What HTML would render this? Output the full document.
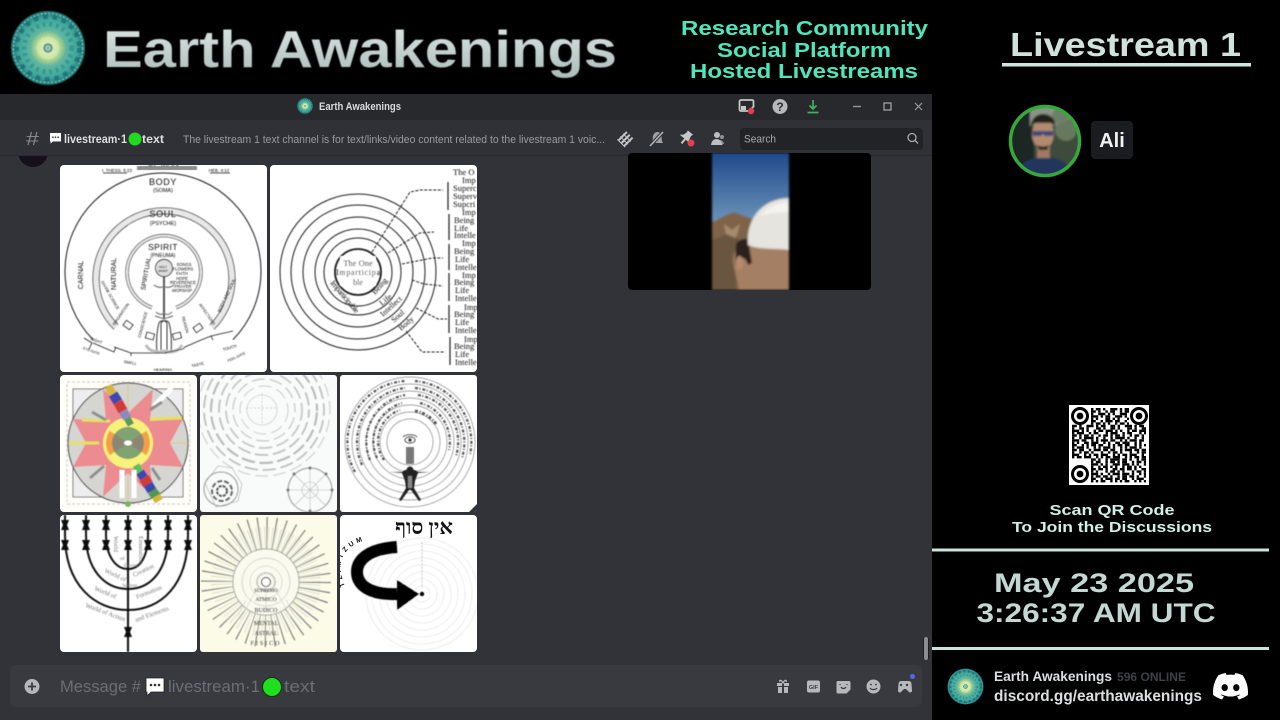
<!DOCTYPE html>
<html><head><meta charset="utf-8"><title>Earth Awakenings</title>
<style>
html,body{margin:0;padding:0;background:#000;width:1280px;height:720px;overflow:hidden}
svg{display:block}
text{font-family:"Liberation Sans","DejaVu Sans",sans-serif}
.s{font-family:"Liberation Serif",serif}
.b{font-weight:bold}
</style></head><body>
<svg xmlns="http://www.w3.org/2000/svg" width="1280" height="720" viewBox="0 0 1280 720">
<defs>
<radialGradient id="mg"><stop offset="0" stop-color="#5f9f9a"/><stop offset=".09" stop-color="#dfeebc"/><stop offset=".28" stop-color="#cfe6a4"/><stop offset=".45" stop-color="#62b8a2"/><stop offset=".8" stop-color="#3fa79d"/><stop offset="1" stop-color="#1c6f70"/></radialGradient>
<linearGradient id="tt" x1="0" y1="0" x2="0" y2="1"><stop offset="0" stop-color="#dfe8e6"/><stop offset="1" stop-color="#a9bcb8"/></linearGradient>
<linearGradient id="sky" x1="0" y1="0" x2="0" y2="1"><stop offset="0" stop-color="#1f4a8c"/><stop offset=".5" stop-color="#6c93b8"/><stop offset="1" stop-color="#b5c8d4"/></linearGradient>
<filter id="bl" filterUnits="userSpaceOnUse" x="0" y="0" width="1280" height="720"><feGaussianBlur stdDeviation=".5"/></filter>
<filter id="bl2" filterUnits="userSpaceOnUse" x="0" y="0" width="1280" height="720"><feGaussianBlur stdDeviation="1"/></filter>
<clipPath id="c1"><rect x="60" y="165" width="207" height="207" rx="4"/></clipPath>
<clipPath id="c2"><rect x="270" y="165" width="207" height="207" rx="4"/></clipPath>
<clipPath id="c3"><rect x="60" y="375" width="137" height="137" rx="4"/></clipPath>
<clipPath id="c4"><rect x="200" y="375" width="137" height="137" rx="3"/></clipPath>
<clipPath id="c5"><rect x="340" y="375" width="137" height="137" rx="3"/></clipPath>
<clipPath id="c6"><rect x="60" y="515" width="137" height="137" rx="4"/></clipPath>
<clipPath id="c7"><rect x="200" y="515" width="137" height="137" rx="3"/></clipPath>
<clipPath id="c8"><rect x="340" y="515" width="137" height="137" rx="4"/></clipPath>
<clipPath id="cv"><rect x="628" y="153" width="243" height="137" rx="4"/></clipPath>
<clipPath id="ca"><circle cx="1045" cy="141" r="34"/></clipPath>
<path id="tz" d="M345 586C336 566 340 546 367 540"/>
<symbol id="m" viewBox="-40 -40 80 80">
<circle r="39" fill="url(#mg)"/>
<circle r="33" fill="none" stroke="#1b6a70" stroke-width="5" stroke-dasharray="5 5" opacity=".75"/>
<circle r="25" fill="none" stroke="#2f8f84" stroke-width="5" stroke-dasharray="3 4" opacity=".7"/>
<circle r="36.500" fill="none" stroke="#7fe0c8" stroke-width="1" stroke-dasharray="2 2"/>
<circle r="15" fill="none" stroke="#a7c96a" stroke-width="6" stroke-dasharray="1 2" opacity=".8"/>
<circle r="4" fill="none" stroke="#3f8f8f" stroke-width="2"/>
</symbol>
<symbol id="chat" viewBox="0 0 20 20">
<path d="M1 1h18v14H6l-4 4v-4H1z" fill="#fff" stroke="#222" stroke-width=".8"/>
<circle cx="6" cy="8" r="1.300" fill="#333"/><circle cx="10" cy="8" r="1.300" fill="#333"/><circle cx="14" cy="8" r="1.300" fill="#333"/>
</symbol>
</defs>

<rect width="1280" height="720" fill="#000"/>

<!-- top banner -->
<use href="#m" x="9" y="10" width="78" height="76" filter="url(#bl)"/>
<text x="103" y="67" font-size="52" class="b" fill="url(#tt)" textLength="514" lengthAdjust="spacingAndGlyphs" filter="url(#bl)">Earth Awakenings</text>
<g fill="#4fe6bd" class="b" text-anchor="middle" font-size="20">
<text x="804.500" y="35" textLength="247" lengthAdjust="spacingAndGlyphs">Research Community</text>
<text x="804" y="57" textLength="174" lengthAdjust="spacingAndGlyphs">Social Platform</text>
<text x="804" y="78" textLength="228" lengthAdjust="spacingAndGlyphs">Hosted Livestreams</text>
</g>

<!-- window -->
<rect x="0" y="94" width="932" height="626" fill="#323338"/>
<circle cx="33" cy="152" r="15" fill="#15101c"/>
<rect x="0" y="94" width="932" height="26" fill="#27292d"/>
<rect x="0" y="120" width="932" height="35" fill="#2f3136"/>
<rect x="0" y="155" width="932" height="1" fill="#292a2e"/>

<!-- title bar -->
<use href="#m" x="297" y="98" width="16" height="16"/>
<text x="319" y="110" font-size="11" class="b" fill="#d8dadd" textLength="82" lengthAdjust="spacingAndGlyphs">Earth Awakenings</text>
<path d="M741 100h11a1.500 1.500 0 0 1 1.500 1.500v5l-4 4.500h-8.500a1.500 1.500 0 0 1-1.500-1.500v-8a1.500 1.500 0 0 1 1.500-1.500z" fill="none" stroke="#c4c6c9" stroke-width="1.800"/>
<rect x="741" y="106" width="5" height="4" fill="#c4c6c9"/>
<circle cx="751" cy="111" r="3.200" fill="#e23f52"/>
<circle cx="780" cy="106.500" r="7.500" fill="#b6b8bb"/>
<text x="780" y="111" font-size="12" class="b" text-anchor="middle" fill="#2a2b2f">?</text>
<path d="M813 100v9M809.500 105.500l3.500 3.500 3.500-3.500M807.500 112.500h11" fill="none" stroke="#3fb35f" stroke-width="1.700"/>
<path d="M853 106.500h8" stroke="#9b9da1" stroke-width="1.300"/>
<rect x="884" y="103" width="7" height="7" fill="none" stroke="#a8aaae" stroke-width="1.200"/>
<path d="M915 103l7 7M922 103l-7 7" stroke="#9b9da1" stroke-width="1.200"/>

<!-- channel header -->
<text x="26" y="145" font-size="18" fill="#84878d" textLength="13" lengthAdjust="spacingAndGlyphs">#</text>
<use href="#chat" x="49" y="132" width="13" height="13"/>
<text x="64" y="143" font-size="12" class="b" fill="#dcdee1" textLength="63" lengthAdjust="spacingAndGlyphs">livestream·1</text>
<circle cx="135" cy="139" r="6.500" fill="#22d922"/>
<text x="142" y="143" font-size="12" class="b" fill="#dcdee1" textLength="22" lengthAdjust="spacingAndGlyphs">text</text>
<text x="183" y="143" font-size="11" fill="#989ba1" textLength="422" lengthAdjust="spacingAndGlyphs">The livestream 1 text channel is for text/links/video content related to the livestream 1 voic...</text>
<g transform="translate(625.500 139) rotate(-45)" stroke="#c2c4c7" stroke-width="2" fill="none"><path d="M-6 -4h12M-6 0h12M-6 4h12"/><path d="M-6 -5.500v11M-2 -5.500v11M2 -5.500v11" stroke-width="1"/></g>
<path d="M652 143c1-2 .5-5 1-7 .6-2.500 2.500-4 4.500-4 2.500 0 3.800 2 4 4 .2 2.500 0 5 1.500 7z" fill="#9ea0a4"/>
<path d="M650 146l13-14" stroke="#2f3136" stroke-width="3.500"/><path d="M650 146l13-14" stroke="#b6b8bb" stroke-width="1.500"/>
<g transform="translate(686 138) rotate(40)"><path d="M-3.500-7h7l-1 2 1 4 2.500 2.500h-13L-4-1l1-4z" fill="#c6c8cb"/><rect x="-1" y="1" width="2" height="6" fill="#c6c8cb"/></g>
<circle cx="691" cy="143" r="3.500" fill="#e23f52"/>
<circle cx="717" cy="135" r="3" fill="#bcbec1"/><path d="M711 145c.5-4 2.500-6 5.500-6s5.500 2 6 6z" fill="#bcbec1"/><circle cx="722" cy="137" r="2" fill="#8e9094"/><path d="M720 140c2 0 3.500 1.500 4 4h-2z" fill="#8e9094"/>
<rect x="740" y="128" width="183" height="22" rx="4" fill="#222327"/>
<text x="744" y="142.500" font-size="11" fill="#a7a9ad" textLength="32" lengthAdjust="spacingAndGlyphs">Search</text>
<circle cx="912" cy="137.500" r="4" fill="none" stroke="#a7a9ad" stroke-width="1.300"/><path d="M915 140.500l3 3" stroke="#a7a9ad" stroke-width="1.300"/>

<!-- video -->
<g clip-path="url(#cv)">
<rect x="628" y="153" width="243" height="137" fill="#000"/>
<g filter="url(#bl2)">
<rect x="712" y="153" width="77" height="137" fill="url(#sky)"/>
<path d="M712 222l12-6 10-4 16 6 39 8v64h-77z" fill="#7f6448"/>
<path d="M712 240l20-8 10 10-6 48h-24z" fill="#6a5640"/>
<path d="M724 224l8 6 8-6-4 14-10-4z" fill="#a58c6e"/>
<path d="M733 262c0-12 6-18 14-18h42v46h-50z" fill="#a47f63"/>
<path d="M736 244c2-4 8-6 12-5l4 24-4 2c-2-6-4-8-7-6l-1 8-5-2z" fill="#2b211b"/>
<ellipse cx="739.500" cy="263" rx="4" ry="7" fill="#b48a6b"/>
<path d="M748 245c-2-24 12-46 41-47v52c-14-2-30 0-41-5z" fill="#e6e4de"/>
<path d="M760 215c8-8 18-12 29-13v10c-10 0-20 2-29 3z" fill="#f4f3ef"/>
</g>
</g>

<!-- IMG 1 -->
<g clip-path="url(#c1)"><rect x="60" y="165" width="207" height="207" fill="#fff"/>
<g filter="url(#bl)" fill="none" stroke="#1a1a1a">
<path d="M93 339.600A98 98 0 1 1 233 339.600" stroke-width="1"/>
<path d="M116 327A68 68 0 1 1 212 327" stroke="#222" stroke-width="7"/>
<path d="M116 327A68 68 0 1 1 212 327" stroke="#e8e8e8" stroke-width="5.400"/>
<path d="M152 307.600A37 37 0 1 1 176 307.600" stroke="#222" stroke-width="3.400"/>
<path d="M152 307.600A37 37 0 1 1 176 307.600" stroke="#ececec" stroke-width="2"/>
<circle cx="164" cy="268" r="8.500" stroke="#222" stroke-width=".9" fill="#ddd"/>
<path d="M164 277v42" stroke="#555" stroke-width="2"/>
<path d="M154 285c4 3 8 3 10 1 2 2 6 2 10-1M156 312c3 3 6 3 8 1 2 2 5 2 8-1M155 316c4 1 6 2 9 3 3-1 5-2 9-3" stroke="#777" stroke-width="1.200"/>
<path d="M161 350v-26a3 3 0 0 1 6 0v26M157 351c-1-8 0-22 2-28 1-3 9-3 10 0 2 6 3 20 2 28" stroke="#333" stroke-width="1"/>
<path d="M146 345c3 7 13 8 18 6 5 2 15 1 18-6" stroke="#bbb" stroke-width="3"/>
<path d="M84 338l8 5-3 6M93 343l21 9 2-5M114 347l17 6v3M131 353h36M164 353l19-4M183 349l2-2 16-7M201 340l10-4 2 4M211 336l22-5" stroke-width=".8"/>
<rect x="124" y="322" width="8" height="6" transform="rotate(35 128 325)" stroke-width=".8"/>
<rect x="146" y="333" width="8" height="6" transform="rotate(15 150 336)" stroke-width=".8"/>
<rect x="173" y="333" width="8" height="6" transform="rotate(-15 177 336)" stroke-width=".8"/>
<rect x="194" y="325" width="8" height="6" transform="rotate(-35 198 328)" stroke-width=".8"/>
<path d="M137 167h60M137 169h60" stroke-width="1"/>
<path d="M103 173h24M210 173h20" stroke-width=".8"/>
</g>
<g fill="#111" text-anchor="middle" font-size="8" filter="url(#bl)">
<text x="163" y="166">OF MAN</text>
<text x="117" y="172" font-size="4.500">I. THESS. 5:23</text><text x="219" y="172" font-size="4.500">HEB. 4:12</text>
<text x="163" y="185" font-size="9" letter-spacing=".6">BODY</text><text x="163" y="192" font-size="5.500">(SOMA)</text>
<text x="163" y="217" font-size="9" letter-spacing=".6">SOUL</text><text x="163" y="225" font-size="5.500">(PSYCHE)</text>
<text x="163" y="250" font-size="8.500" letter-spacing=".4">SPIRIT</text><text x="163" y="257" font-size="5">(PNEUMA)</text>
<text x="163" y="268" font-size="3">HOLY</text><text x="163" y="272" font-size="3">SPIRIT</text>
<text transform="translate(83 275) rotate(-90)" font-size="7">CARNAL</text>
<text transform="translate(116 274) rotate(-90)" font-size="7">NATURAL</text>
<text transform="translate(148 274) rotate(-80)" font-size="6.500">SPIRITUAL</text>
<g font-size="4.200"><text x="184" y="266">SONGS</text><text x="183" y="270.500">FLOWERS</text><text x="182" y="275">FAITH</text><text x="182" y="280">HOPE</text><text x="183" y="284">REVERENCE</text><text x="183" y="288">PRAYER</text><text x="182" y="292">WORSHIP</text></g>
<text transform="translate(109 296) rotate(60)" font-size="4">DIVINE SCIENCE</text>
<text transform="translate(228 296) rotate(-65)" font-size="4.500">BODY AND SOUL</text>
<text transform="translate(122 315) rotate(-55)" font-size="4">IMAGINATION</text>
<text transform="translate(144 325) rotate(-75)" font-size="4">CONSCIENCE</text>
<text transform="translate(184 325) rotate(75)" font-size="4">REASON</text>
<text transform="translate(206 315) rotate(55)" font-size="4">AFFECTIONS</text>
<text transform="translate(96 342) rotate(20)" font-size="4">SIGHT</text>
<text transform="translate(91 352) rotate(20)" font-size="3.500">EYE-GATE</text>
<text x="130" y="364" font-size="4" transform="rotate(10 130 364)">SMELL</text>
<text x="163" y="371" font-size="4">HEARING</text>
<text x="198" y="366" font-size="4" transform="rotate(-12 198 366)">TASTE</text>
<text x="230" y="349" font-size="4" transform="rotate(-18 230 349)">TOUCH</text>
<text x="237" y="358" font-size="3.500" transform="rotate(-25 237 358)">FEEL-GATE</text>
</g></g>

<!-- IMG 2 -->
<g clip-path="url(#c2)"><rect x="270" y="165" width="207" height="207" fill="#fff"/>
<g filter="url(#bl)" fill="none" stroke="#1e1e1e" stroke-width="1">
<circle cx="358" cy="272" r="78"/><circle cx="358" cy="272" r="67"/><circle cx="358" cy="272" r="55"/><circle cx="358" cy="272" r="43"/><circle cx="358" cy="272" r="34"/>
<circle cx="358" cy="272" r="23" stroke-width="1.800"/>
<path d="M372 252l38-60 10-2h23M388 253l32-20 14-1M402 264l30-6h11M412 280l12 4 19 2M416 308l22 11h9M406 331l16 21h23" stroke-dasharray="3 1.500"/>
<path d="M448 182v28M449 214v26M449 244v26M449 273v28M449 305v28M450 337v28" stroke-width="1.200"/>
</g>
<g class="s" fill="#111" filter="url(#bl)">
<rect x="340" y="256" width="36" height="30" fill="#fff"/>
<text class="s" x="358" y="266" font-size="8.500" text-anchor="middle">The One</text>
<text class="s" x="358" y="275" font-size="8" text-anchor="middle" textLength="44">Imparticipa</text>
<text class="s" x="358" y="285" font-size="8" text-anchor="middle">ble</text>
<g font-size="8.500">
<text class="s" x="453" y="175">The O</text><text class="s" x="462" y="183">Imp</text><text class="s" x="453" y="191">Superc</text><text class="s" x="453" y="199">Superv</text><text class="s" x="453" y="207">Supcri</text>
<text class="s" x="462" y="215">Imp</text><text class="s" x="454" y="223">Being</text><text class="s" x="454" y="231">Life</text><text class="s" x="454" y="238">Intelle</text>
<text class="s" x="462" y="246">Imp</text><text class="s" x="454" y="254">Being</text><text class="s" x="455" y="262">Life</text><text class="s" x="455" y="270">Intelle</text>
<text class="s" x="462" y="278">Imp</text><text class="s" x="454" y="285">Being</text><text class="s" x="455" y="293">Life</text><text class="s" x="455" y="301">Intelle</text>
<text class="s" x="464" y="310">Imp</text><text class="s" x="454" y="317">Being</text><text class="s" x="455" y="325">Life</text><text class="s" x="455" y="333">Intelle</text>
<text class="s" x="464" y="342">Imp</text><text class="s" x="454" y="349">Being</text><text class="s" x="455" y="357">Life</text><text class="s" x="455" y="365">Intelle</text>
</g>
<text class="s" transform="translate(330 283) rotate(50)" font-size="8" textLength="40">Imparticipable</text>
<text class="s" transform="translate(375 295) rotate(-48)" font-size="8">Being</text>
<text class="s" transform="translate(382 306) rotate(-40)" font-size="8">Life</text>
<text class="s" transform="translate(383 317) rotate(-42)" font-size="8">Intellect</text>
<text class="s" transform="translate(394 323) rotate(-42)" font-size="8">Soul</text>
<text class="s" transform="translate(401 331) rotate(-40)" font-size="8">Body</text>
</g></g>

<!-- IMG 3 -->
<g clip-path="url(#c3)"><rect x="60" y="375" width="137" height="137" fill="#fffef8"/>
<g filter="url(#bl)">
<rect x="67" y="382" width="123" height="122" fill="none" stroke="#bbb" stroke-width=".8" stroke-dasharray="3 2"/>
<rect x="73" y="389" width="110" height="108" fill="#eee" stroke="#555" stroke-width=".8"/>
<circle cx="128" cy="443" r="60" fill="#d5d5d2" stroke="#555" stroke-width="1.200"/>
<path d="M68 443h120M128 383v120" stroke="#e8c060" stroke-width=".8"/>
<polygon points="103,389 128,413 153,389 150,421 183,419 170,443 183,467 150,465 153,497 128,473 103,497 106,465 73,467 86,443 73,419 106,421" fill="#ec8b90"/>
<path d="M69 443h30M150 419l32-1M82 420l28 1" stroke="#e8e05a" stroke-width="3"/>
<path d="M172 388l-18 18" stroke="#fff" stroke-width="5"/>
<path d="M92 412l14 8M150 410l12-8M90 478l14-12M160 480l-8-12" stroke="#8f8f8f" stroke-width="3"/>
<circle cx="128" cy="443" r="25" fill="#f7f27c"/>
<circle cx="128" cy="443" r="22" fill="#f2a047"/>
<path d="M128 443l-21-14A25 25 0 0 1 149 429zM128 443l-21 14A25 25 0 0 0 149 457z" fill="#f7f27c"/>
<path d="M128 443l-12-9a15 15 0 0 1 24 0zM128 443l-12 9a15 15 0 0 0 24 0z" fill="#f2a047"/>
<circle cx="128" cy="443" r="16" fill="#8d8672"/>
<path d="M128 443l-13-9a16 16 0 0 1 26 0zM128 443l-13 9a16 16 0 0 0 26 0z" fill="#7fa372"/>
<ellipse cx="128" cy="443" rx="4" ry="2.500" fill="#fff"/>
<path d="M108 386l5 8" stroke="#d4b63a" stroke-width="8"/><path d="M113 394l5 8" stroke="#3d46b0" stroke-width="10"/><path d="M118 402l5 9" stroke="#d23a33" stroke-width="10"/><path d="M123 411l4 7" stroke="#8a8ac0" stroke-width="9"/><path d="M127 418l4 7" stroke="#5b9a5a" stroke-width="7"/>
<path d="M136 465l4 7" stroke="#5bc05a" stroke-width="7"/><path d="M140 472l4 6" stroke="#3d46b0" stroke-width="9"/><path d="M144 478l4 6" stroke="#d23a33" stroke-width="11"/><path d="M148 484l4 7" stroke="#3d46b0" stroke-width="10"/><path d="M152 491l4 5" stroke="#4e9a50" stroke-width="10"/><path d="M156 496l3 5" stroke="#d4b63a" stroke-width="9"/>
<circle cx="128" cy="504" r="3" fill="#7cb455"/>
<path d="M122 470v28M134 470v28" stroke="#fff" stroke-width="5"/>
</g></g>

<!-- IMG 4 -->
<g clip-path="url(#c4)"><rect x="200" y="375" width="137" height="137" fill="#f9fafa"/>
<g filter="url(#bl)" fill="none" stroke="#888">
<circle cx="262" cy="410" r="15" stroke="#ccc" stroke-width=".8"/>
<path d="M262 393v30M246 408h32" stroke="#aaa" stroke-width=".5" stroke-dasharray="2 2"/>
<g stroke-dasharray="12 6" stroke-linecap="round">
<circle cx="264" cy="410" r="24" stroke="#ccc" stroke-width="1"/>
<circle cx="264" cy="410" r="31" stroke="#c4c4c4" stroke-width="1.200" stroke-dashoffset="10"/>
<circle cx="264" cy="410" r="38" stroke="#c8c8c8" stroke-width="1.800" stroke-dashoffset="20"/>
<circle cx="264" cy="410" r="45" stroke="#c0c0c0" stroke-width="1.800" stroke-dashoffset="5"/>
<circle cx="264" cy="410" r="53" stroke="#bbb" stroke-width="2.200" stroke-dashoffset="15"/>
<circle cx="264" cy="410" r="60" stroke="#c0c0c0" stroke-width="1.800" stroke-dashoffset="25"/>
<circle cx="264" cy="410" r="66" stroke="#d0d0d0" stroke-width="1.200" stroke-dashoffset="8"/>
</g>
<circle cx="221" cy="489" r="17" stroke="#999"/>
<circle cx="222" cy="491" r="10" stroke="#666" stroke-width="2" stroke-dasharray="5 2"/>
<circle cx="222" cy="491" r="5" stroke="#555" stroke-width="2" stroke-dasharray="3 1"/>
<path d="M205 483l13-17 14 2 10 16-4 17-22 6z" stroke="#aaa" stroke-width=".6"/>
<circle cx="310" cy="490" r="22" stroke="#999"/>
<path d="M310 468v44M288 490h44M294 474l32 32M326 474l-32 32" stroke="#bbb" stroke-width=".6"/>
<circle cx="310" cy="490" r="8" stroke="#bbb" stroke-width=".6"/>
<g fill="#777" stroke="none"><circle cx="310" cy="468" r="1.500"/><circle cx="288" cy="490" r="1.500"/><circle cx="332" cy="490" r="1.500"/><circle cx="310" cy="511" r="1.500"/><circle cx="294" cy="474" r="1.500"/><circle cx="326" cy="474" r="1.500"/></g>
</g></g>

<!-- IMG 5 -->
<g clip-path="url(#c5)"><rect x="340" y="375" width="137" height="137" fill="#fff"/>
<g filter="url(#bl)" fill="none" stroke="#888" stroke-width=".7">
<circle cx="410" cy="442" r="65"/><circle cx="410" cy="442" r="58"/><circle cx="410" cy="442" r="51"/><circle cx="410" cy="442" r="44"/><circle cx="410" cy="442" r="37"/><circle cx="410" cy="442" r="30"/><circle cx="410" cy="442" r="23"/>
<g stroke="#555" stroke-width="2.200" stroke-dasharray="3 1.500 1 2" fill="none">
<path d="M436 424A32 32 0 0 0 415 411" stroke-width="3"/>
<path d="M355 472A61.500 61.500 0 0 1 405 381"/><path d="M415 381A61.500 61.500 0 0 1 470 455"/>
<path d="M362 465A54.500 54.500 0 0 1 405 388"/><path d="M415 388A54.500 54.500 0 0 1 462 458"/>
<path d="M370 460A47.500 47.500 0 0 1 405 395"/><path d="M418 395A47.500 47.500 0 0 1 456 456"/>
<path d="M377 458A40 40 0 0 1 402 403"/><path d="M420 403A40 40 0 0 1 449 450"/>
<path d="M384 460A33 33 0 0 1 400 410"/>
</g>
</g>
<g fill="#222" filter="url(#bl)">
<ellipse cx="410" cy="440" rx="5" ry="3" fill="#fff" stroke="#222"/><circle cx="410" cy="440" r="1.800"/>
<path d="M403 437c2-3 12-3 14 0" fill="none" stroke="#222" stroke-width=".8"/>
<rect x="406" y="447" width="8" height="17" fill="#777"/>
<circle cx="410" cy="470" r="3.500"/>
<path d="M390 472h12l3-2h10l3 2h12l-12 1-3 8-1 7 7 12-2 1-8-11h-2l-8 11-2-1 7-12-1-7-3-8z"/>
<rect x="408" y="476" width="4" height="12" fill="#888"/>
</g>
<path d="M469 512l8-8v8z" fill="#323338"/>
</g>

<!-- IMG 6 -->
<g clip-path="url(#c6)"><rect x="60" y="515" width="137" height="137" fill="#fff"/>
<g filter="url(#bl)" fill="none" stroke="#111" stroke-width="2">
<path d="M128 515v137"/>
<path d="M65 515v20C65 585 95 610 128 610S188 585 188 535v-20"/>
<path d="M86 515v20C86 570 105 589 128 589S168 570 168 535v-20"/>
<path d="M106 515v20C106 555 115 569 128 569S148 555 148 535v-20"/>
<g fill="#111" stroke="none">
<path d="M61 520h8l-2 5 2 5h-8l2-5zM61 540h8l-2 5 2 5h-8l2-5z"/>
<path d="M82 520h8l-2 5 2 5h-8l2-5zM82 540h8l-2 5 2 5h-8l2-5z"/>
<path d="M102 520h8l-2 5 2 5h-8l2-5zM102 540h8l-2 5 2 5h-8l2-5z"/>
<path d="M124 520h8l-2 5 2 5h-8l2-5zM124 540h8l-2 5 2 5h-8l2-5zM124 627h8l-2 5 2 5h-8l2-5z"/>
<path d="M144 520h8l-2 5 2 5h-8l2-5zM144 540h8l-2 5 2 5h-8l2-5z"/>
<path d="M164 520h8l-2 5 2 5h-8l2-5zM164 540h8l-2 5 2 5h-8l2-5z"/>
<path d="M184 520h8l-2 5 2 5h-8l2-5zM184 540h8l-2 5 2 5h-8l2-5z"/>
</g></g>
<g fill="#777" font-size="6.500" filter="url(#bl)" class="s">
<text class="s" transform="translate(114 536) rotate(90)">World</text>
<text class="s" transform="translate(139 536) rotate(90)">Emanation</text>
<text class="s" x="120" y="560" font-size="5.500">of</text>
<text class="s" x="124" y="567" font-size="5.500">Divine</text>
<text class="s" transform="translate(104 572) rotate(25)">World of</text>
<text class="s" transform="translate(134 577) rotate(-25)">Creation</text>
<text class="s" x="122" y="587" font-size="5.500">Sefirot</text>
<text class="s" transform="translate(94 590) rotate(22)">World of</text>
<text class="s" transform="translate(137 599) rotate(-22)">Formation</text>
<text class="s" transform="translate(85 607) rotate(20)">World of Action</text>
<text class="s" transform="translate(136 622) rotate(-20)">and Elements</text>
</g></g>

<!-- IMG 7 -->
<g clip-path="url(#c7)"><rect x="200" y="515" width="137" height="137" fill="#fbfbe8"/>
<g filter="url(#bl)" fill="none">
<circle cx="266" cy="582" r="49" stroke="#777" stroke-width="32" stroke-dasharray=".9 6.800"/>
<circle cx="266" cy="582" r="44" stroke="#aaa" stroke-width="22" stroke-dasharray=".5 3" stroke-dashoffset="1" opacity=".6"/>
<circle cx="266" cy="582" r="33" fill="#fafaee" stroke="#888" stroke-width=".7"/>
<circle cx="266" cy="582" r="24" stroke="#aaa" stroke-width=".5"/>
<circle cx="266" cy="582" r="16" stroke="#bbb" stroke-width=".5"/>
<circle cx="266" cy="582" r="9" stroke="#999" stroke-width="2" stroke-dasharray="1 1"/>
<circle cx="266" cy="582" r="4.500" stroke="#222" stroke-width="1" fill="#fff"/>
<path d="M266 586v26M256 590l-16 30M276 590l16 30M246 600l-8 15M286 600l8 15" stroke="#ccc" stroke-width=".6"/>
</g>
<g fill="#333" font-size="6" text-anchor="middle" class="s" filter="url(#bl)">
<text class="s" x="266" y="592" font-size="5">SUPREMO</text>
<text class="s" x="266" y="601" font-size="5.500">ATMICO</text>
<text class="s" x="266" y="612" font-size="6">BUDICO</text>
<text class="s" x="266" y="625">MENTAL</text>
<text class="s" x="266" y="635">ASTRAL</text>
<text class="s" x="266" y="645" letter-spacing="2">FISICO</text>
</g></g>

<!-- IMG 8 -->
<g clip-path="url(#c8)"><rect x="340" y="515" width="137" height="137" fill="#fff"/>
<g filter="url(#bl)" fill="none">
<g stroke="#ccc" stroke-width=".6" stroke-dasharray="1.500 1">
<circle cx="422" cy="594" r="8"/><circle cx="422" cy="594" r="15"/><circle cx="422" cy="594" r="22"/><circle cx="422" cy="594" r="29"/><circle cx="422" cy="594" r="36"/><circle cx="422" cy="594" r="43"/><circle cx="422" cy="594" r="50"/><circle cx="422" cy="594" r="56"/>
</g>
<path d="M422 542v46" stroke="#999" stroke-width=".6" stroke-dasharray="2 1.500"/>
<path d="M397 547C368 549 357 560 357 572c0 16 18 23 40 22" stroke="#000" stroke-width="12"/>
<path d="M397 580l22 14-22 16z" fill="#000"/>
<circle cx="422" cy="594" r="2.200" fill="#000"/>
</g>
<text x="424" y="534" font-size="21" class="s b" fill="#111" text-anchor="middle" style="font-family:'Liberation Serif','DejaVu Serif',serif" direction="rtl">אין סוף</text>
<text font-size="6.800" class="b" fill="#111"><textPath href="#tz" textLength="56">TZIMTZUM</textPath></text>
</g>

<!-- scrollbar -->
<rect x="923" y="637" width="6" height="23" rx="3" fill="#1e1f22"/>
<rect x="924" y="637" width="4" height="23" rx="2" fill="#8a8c90"/>

<!-- input -->
<rect x="10" y="665" width="912" height="42" rx="6" fill="#383a40"/>
<circle cx="32" cy="686.500" r="7.500" fill="#b5b7ba"/><path d="M28 686.500h8M32 682.500v8" stroke="#383a40" stroke-width="1.800"/>
<text x="60" y="692" font-size="17" fill="#6b6e75" textLength="81" lengthAdjust="spacingAndGlyphs">Message #</text>
<use href="#chat" x="145" y="677" width="20" height="20"/>
<text x="168" y="692" font-size="17" fill="#6b6e75" textLength="92" lengthAdjust="spacingAndGlyphs">livestream·1</text>
<circle cx="272" cy="687" r="9.500" fill="#1ede1e" stroke="#14300f" stroke-width="1"/>
<text x="284" y="692" font-size="17" fill="#6b6e75" textLength="31" lengthAdjust="spacingAndGlyphs">text</text>
<path d="M777 683h12v3h-5v-3h-2v3h-5zM778 687h4v6h-4zM784 687h4v6h-4z" fill="#b6b8bb"/><path d="M780 682c-1-2 1-3 3 1 2-4 4-3 3-1" fill="none" stroke="#b6b8bb" stroke-width="1.300"/>
<rect x="807" y="680.500" width="13" height="12" rx="2" fill="#b6b8bb"/><text x="813.500" y="689" font-size="5.500" class="b" fill="#383a40" text-anchor="middle">GIF</text>
<path d="M838 681h11a1.500 1.500 0 0 1 1.500 1.500v7l-4 4h-8.500a1.500 1.500 0 0 1-1.500-1.500v-9.500a1.500 1.500 0 0 1 1.500-1.500z" fill="#b6b8bb"/><path d="M841 687c1 2 4 2 5 0M840 684v1M847 684v1" stroke="#383a40" stroke-width="1.200" fill="none"/>
<circle cx="873.500" cy="686.500" r="7" fill="#b6b8bb"/><path d="M870 688c1 2 6 2 7 0" stroke="#383a40" stroke-width="1.200" fill="none"/><circle cx="871" cy="684.500" r=".9" fill="#383a40"/><circle cx="876" cy="684.500" r=".9" fill="#383a40"/>
<path d="M899 681h10a3 3 0 0 1 2.500 3l.5 7a1.800 1.800 0 0 1-3 1l-3-3h-2l-3 3a1.800 1.800 0 0 1-3-1l.5-7a3 3 0 0 1 2.500-3z" fill="#b6b8bb"/><circle cx="901" cy="685" r="1.200" fill="#383a40"/><circle cx="907" cy="685" r="1.200" fill="#383a40"/>
<circle cx="912.500" cy="676.500" r="2.500" fill="#5865f2"/>

<!-- right column -->
<text x="1010" y="56" font-size="33" class="b" fill="#cfe3dc" textLength="231" lengthAdjust="spacingAndGlyphs">Livestream 1</text>
<rect x="1002" y="63" width="249" height="3.500" fill="#cfe6de"/>
<!-- avatar -->
<g clip-path="url(#ca)">
<rect x="1010" y="106" width="70" height="70" fill="#3d4a3c"/>
<g filter="url(#bl2)">
<rect x="1010" y="106" width="24" height="70" fill="#1f2622"/>
<path d="M1030 106h40v20h-40z" fill="#8a9486"/>
<circle cx="1066" cy="130" r="11" fill="#66795f"/>
<circle cx="1060" cy="116" r="8" fill="#6d7f66"/>
<path d="M1016 176c2-13 14-19 28-19s26 6 28 19z" fill="#24365c"/>
<rect x="1037" y="146" width="13" height="12" fill="#a07a63"/>
<ellipse cx="1043" cy="134" rx="11" ry="15" fill="#b28a70"/>
<path d="M1031 127c0-9 6-13 12-13s13 4 12 12l-4-3h-16z" fill="#24201d"/>
<path d="M1032 131h22l-1 5h-8l-2-2-2 2h-8z" fill="#3e4a78"/>
<path d="M1037 145c4 2 8 2 12 0l-2 5h-8z" fill="#33241f"/>
</g>
</g>
<circle cx="1045" cy="141" r="34.500" fill="none" stroke="#37a83b" stroke-width="3.500"/>
<rect x="1091" y="121" width="42" height="38" rx="4" fill="#1b1c1f"/>
<text x="1112" y="147" font-size="20" class="b" fill="#f1f1f1" text-anchor="middle">Ali</text>

<!-- QR -->
<rect x="1069" y="405" width="80" height="80" fill="#fff"/>
<g fill="none" stroke="#000" stroke-width="2.400">
<path d="M1091 409.200h38" stroke-dasharray="2.400 2.400 4.800 2.400 2.400 4.800 7.200 2.400"/>
<path d="M1091 411.600h38" stroke-dasharray="4.800 2.400 2.400 4.800 2.400 2.400 4.800"/>
<path d="M1091 414h38" stroke-dasharray="2.400 4.800 7.200 2.400 2.400 2.400"/>
<path d="M1091 416.400h38" stroke-dasharray="7.200 2.400 2.400 2.400 4.800 4.800"/>
<path d="M1091 418.800h38" stroke-dasharray="2.400 2.400 2.400 7.200 4.800 2.400"/>
<path d="M1091 421.200h38" stroke-dasharray="4.800 4.800 2.400 2.400 7.200 2.400"/>
<path d="M1091 423.600h38" stroke-dasharray="2.400 2.400 4.800 2.400 2.400 2.400 2.400 4.800"/>
<path d="M1072 426h74" stroke-dasharray="4.800 2.400 2.400 4.800 7.200 2.400 2.400 2.400 4.800 4.800"/>
<path d="M1072 428.400h74" stroke-dasharray="2.400 4.800 4.800 2.400 2.400 7.200 4.800 2.400"/>
<path d="M1072 430.800h74" stroke-dasharray="7.200 2.400 2.400 2.400 2.400 4.800 2.400 2.400 4.800 2.400"/>
<path d="M1072 433.200h74" stroke-dasharray="2.400 2.400 7.200 4.800 2.400 2.400 4.800 7.200"/>
<path d="M1072 435.600h74" stroke-dasharray="4.800 2.400 2.400 2.400 4.800 2.400 2.400 4.800 2.400 2.400"/>
<path d="M1072 438h74" stroke-dasharray="2.400 4.800 2.400 2.400 9.600 2.400 2.400 4.800"/>
<path d="M1072 440.400h74" stroke-dasharray="7.200 2.400 4.800 4.800 2.400 2.400 2.400 2.400"/>
<path d="M1072 442.800h74" stroke-dasharray="2.400 2.400 2.400 4.800 4.800 2.400 7.200 4.800"/>
<path d="M1072 445.200h74" stroke-dasharray="4.800 4.800 2.400 2.400 2.400 2.400 4.800 2.400"/>
<path d="M1072 447.600h74" stroke-dasharray="2.400 2.400 7.200 2.400 2.400 4.800 2.400 2.400"/>
<path d="M1072 450h74" stroke-dasharray="4.800 2.400 4.800 4.800 2.400 2.400 7.200 2.400"/>
<path d="M1072 452.400h74" stroke-dasharray="2.400 4.800 2.400 2.400 4.800 2.400 2.400 7.200"/>
<path d="M1072 454.800h74" stroke-dasharray="7.200 4.800 2.400 2.400 2.400 2.400 4.800 2.400"/>
<path d="M1072 457.200h74" stroke-dasharray="2.400 2.400 4.800 2.400 7.200 4.800 2.400 2.400"/>
<path d="M1091 459.600h55" stroke-dasharray="4.800 2.400 2.400 4.800 2.400 2.400 9.600 2.400"/>
<path d="M1091 462h55" stroke-dasharray="2.400 2.400 4.800 4.800 2.400 2.400 4.800 2.400"/>
<path d="M1091 464.400h55" stroke-dasharray="7.200 2.400 2.400 2.400 2.400 4.800 7.200 2.400"/>
<path d="M1091 466.800h55" stroke-dasharray="2.400 4.800 2.400 2.400 4.800 2.400 2.400 2.400"/>
<path d="M1091 469.200h55" stroke-dasharray="4.800 2.400 4.800 2.400 2.400 4.800 4.800 2.400"/>
<path d="M1091 471.600h55" stroke-dasharray="2.400 2.400 2.400 7.200 2.400 2.400 4.800 2.400"/>
<path d="M1091 474h55" stroke-dasharray="7.200 2.400 2.400 4.800 2.400 2.400 7.200 2.400"/>
<path d="M1091 476.400h55" stroke-dasharray="2.400 2.400 4.800 2.400 4.800 2.400 2.400 4.800"/>
<path d="M1091 478.800h55" stroke-dasharray="4.800 4.800 2.400 2.400 7.200 2.400 4.800 2.400"/>
<path d="M1091 481.200h55" stroke-dasharray="2.400 2.400 2.400 2.400 4.800 4.800 2.400 2.400"/>
</g>
<g fill="none" stroke="#000" stroke-width="3">
<circle cx="1080" cy="416" r="7.500"/><circle cx="1139" cy="416" r="7.500"/><circle cx="1080" cy="474" r="7.500"/>
</g>
<circle cx="1080" cy="416" r="3.400"/><circle cx="1139" cy="416" r="3.400"/><circle cx="1080" cy="474" r="3.400"/>

<g fill="#d0efe6" text-anchor="middle" class="b" font-size="15">
<text x="1112" y="515" textLength="125" lengthAdjust="spacingAndGlyphs">Scan QR Code</text>
<text x="1112" y="532" textLength="200" lengthAdjust="spacingAndGlyphs">To Join the Discussions</text>
</g>
<rect x="932" y="548.500" width="337" height="3" fill="#c8e5dd"/>
<g fill="#c3d8d2" text-anchor="middle" class="b" font-size="27">
<text x="1094" y="592" textLength="200" lengthAdjust="spacingAndGlyphs">May 23 2025</text>
<text x="1096" y="622" textLength="239" lengthAdjust="spacingAndGlyphs">3:26:37 AM UTC</text>
</g>
<rect x="932" y="647" width="337" height="3" fill="#c8e5dd"/>

<!-- footer -->
<use href="#m" x="947" y="668" width="37" height="37"/>
<text x="994" y="681" font-size="14" class="b" fill="#dcdee0" textLength="118" lengthAdjust="spacingAndGlyphs">Earth Awakenings</text>
<text x="1117" y="681" font-size="12" class="b" fill="#3f4144" textLength="69" lengthAdjust="spacingAndGlyphs">596 ONLINE</text>
<text x="994" y="701" font-size="16" class="b" fill="#dcdee0" textLength="208" lengthAdjust="spacingAndGlyphs">discord.gg/earthawakenings</text>
<svg x="1213" y="673" width="35" height="26.500" viewBox="0 0 127.140 96.360"><path fill="#fff" d="M107.700,8.070A105.150,105.150,0,0,0,81.470,0a72.060,72.060,0,0,0-3.360,6.830A97.680,97.680,0,0,0,49,6.830,72.370,72.370,0,0,0,45.640,0,105.890,105.890,0,0,0,19.390,8.090C2.790,32.650-1.710,56.600.54,80.210h0A105.730,105.730,0,0,0,32.710,96.360,77.700,77.700,0,0,0,39.600,85.250a68.420,68.420,0,0,1-10.850-5.180c.91-.66,1.800-1.340,2.660-2a75.570,75.570,0,0,0,64.320,0c.87.710,1.760,1.390,2.660,2a68.680,68.680,0,0,1-10.870,5.190,77,77,0,0,0,6.890,11.100A105.250,105.250,0,0,0,126.600,80.220h0C129.240,52.840,122.090,29.110,107.700,8.070ZM42.450,65.690C36.180,65.690,31,60,31,53s5-12.740,11.430-12.740S54,46,53.890,53,48.840,65.690,42.450,65.690Zm42.240,0C78.410,65.690,73.250,60,73.250,53s5-12.740,11.440-12.740S96.230,46,96.120,53,91.080,65.690,84.690,65.690Z"/></svg>
</svg>
</body></html>
